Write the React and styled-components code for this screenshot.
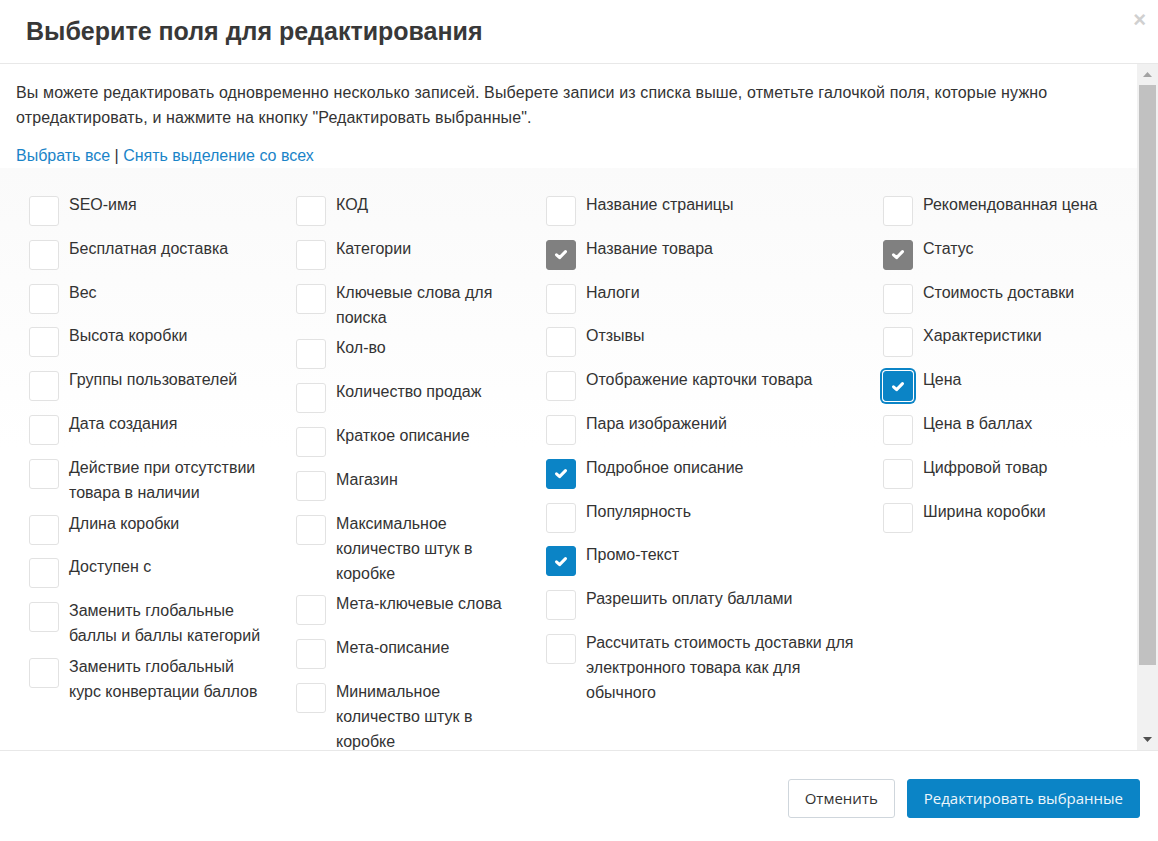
import React from 'react';
import styled, { createGlobalStyle } from 'styled-components';

//глобальные стили
const GlobalStyle = createGlobalStyle`
  html, body { margin: 0; padding: 0; background: #fff; }
  body { font-family: "Liberation Sans", Arial, sans-serif; color: #333; }
  * { box-sizing: border-box; }
`;

const BLUE = '#0b84c6';

const Modal = styled.div`
  width: 100vw;
  height: 100vh;
  display: flex;
  flex-direction: column;
  background: #fff;
`;

const Header = styled.div`
  height: 64px;
  flex-shrink: 0;
  display: flex;
  align-items: center;
  justify-content: space-between;
  padding: 0 12px 0 26px;
  border-bottom: 1px solid #e8e8e8;
`;

const Title = styled.h2`
  margin: 0 0 1px;
  font-size: 25px;
  font-weight: bold;
  color: #383838;
`;

const Close = styled.button`
  align-self: flex-start;
  margin-top: 9px;
  padding: 0;
  border: 0;
  background: none;
  font-family: "Liberation Sans", Arial, sans-serif;
  font-size: 22px;
  font-weight: bold;
  line-height: 1;
  color: #d0d0d0;
  cursor: pointer;
`;

const BodyRow = styled.div`
  flex: 1;
  min-height: 0;
  display: flex;
`;

const Content = styled.div`
  flex: 1;
  overflow: hidden;
  padding: 16px 0 0 16px;
`;

//полоса прокрутки (нарисованная)
const ScrollBar = styled.div`
  width: 21px;
  flex-shrink: 0;
  display: flex;
  flex-direction: column;
  background: #f1f1f1;
`;

const ScrollButton = styled.div`
  height: 21px;
  flex-shrink: 0;
  display: flex;
  align-items: center;
  justify-content: center;
`;

const Track = styled.div`
  flex: 1;
  padding: 0 2px;
`;

const Thumb = styled.div`
  height: 580px;
  background: #c1c1c1;
`;

const Intro = styled.p`
  margin: 0 16px 13px 0;
  font-size: 16px;
  line-height: 25px;
  letter-spacing: 0.13px;
  color: #333;
`;

const Links = styled.div`
  font-size: 16px;
  line-height: 25px;
  color: #333;
`;

const Link = styled.a`
  color: #1a84c8;
  text-decoration: none;
  cursor: pointer;
`;

const Fields = styled.div`
  display: grid;
  grid-template-columns: 267px 250px 337px 1fr;
  margin-left: -16px;
  padding: 24px 0 70px 29px;
  background: linear-gradient(#fafafa, #fff 280px);
`;

const Column = styled.div`
  display: flex;
  flex-direction: column;
`;

const Item = styled.label`
  display: flex;
  align-items: flex-start;
  min-height: 38px;
  margin-bottom: 5.8px;
  cursor: pointer;
`;

const Box = styled.span`
  flex-shrink: 0;
  width: 30px;
  height: 30px;
  margin-top: 4px;
  margin-right: 10px;
  border-radius: 3px;
  display: flex;
  align-items: center;
  justify-content: center;
  border: 1px solid ${p => (p.$state === 'gray' ? '#808080' : p.$state ? BLUE : '#e2e2e2')};
  background: ${p => (p.$state === 'gray' ? '#808080' : p.$state ? BLUE : '#fff')};
  box-shadow: ${p => (p.$state === 'focus' ? `0 0 0 1px #fff, 0 0 0 3px ${BLUE}` : 'none')};
`;

const Label = styled.span`
  font-size: 16px;
  line-height: 25px;
  color: #333;
  white-space: pre-line;
`;

const Footer = styled.div`
  height: 91px;
  flex-shrink: 0;
  display: flex;
  align-items: center;
  justify-content: flex-end;
  gap: 12px;
  padding: 4px 18px 0 0;
  border-top: 1px solid #e8e8e8;
`;

const Button = styled.button`
  height: 39px;
  padding: 0 16px;
  border-radius: 3px;
  font-family: "Open Sans", "Noto Sans", sans-serif;
  font-size: 15px;
  cursor: pointer;
  border: 1px solid ${p => (p.$primary ? BLUE : '#cfd6dc')};
  background: ${p => (p.$primary ? BLUE : '#fff')};
  color: ${p => (p.$primary ? '#eef6fb' : '#333')};
`;

const Check = () => (
  <svg width="14" height="11" viewBox="0 0 14 11">
    <polyline points="2.5,5.8 5.6,8.6 11.5,2.6" fill="none" stroke="#fff" strokeWidth="3" strokeLinecap="round" strokeLinejoin="round" />
  </svg>
);

const Arrow = ({ down }) => (
  <svg width="9" height="5" viewBox="0 0 9 5">
    {down
      ? <polygon points="0,0 9,0 4.5,5" fill="#505050" />
      : <polygon points="0,5 9,5 4.5,0" fill="#a3a3a3" />}
  </svg>
);

//поля по колонкам
const columns = [
  [
    ['SEO-имя'],
    ['Бесплатная доставка'],
    ['Вес'],
    ['Высота коробки'],
    ['Группы пользователей'],
    ['Дата создания'],
    ['Действие при отсутствии\nтовара в наличии'],
    ['Длина коробки'],
    ['Доступен с'],
    ['Заменить глобальные\nбаллы и баллы категорий'],
    ['Заменить глобальный\nкурс конвертации баллов'],
  ],
  [
    ['КОД'],
    ['Категории'],
    ['Ключевые слова для\nпоиска'],
    ['Кол-во'],
    ['Количество продаж'],
    ['Краткое описание'],
    ['Магазин'],
    ['Максимальное\nколичество штук в\nкоробке'],
    ['Мета-ключевые слова'],
    ['Мета-описание'],
    ['Минимальное\nколичество штук в\nкоробке'],
  ],
  [
    ['Название страницы'],
    ['Название товара', 'gray'],
    ['Налоги'],
    ['Отзывы'],
    ['Отображение карточки товара'],
    ['Пара изображений'],
    ['Подробное описание', 'blue'],
    ['Популярность'],
    ['Промо-текст', 'blue'],
    ['Разрешить оплату баллами'],
    ['Рассчитать стоимость доставки для\nэлектронного товара как для\nобычного'],
  ],
  [
    ['Рекомендованная цена'],
    ['Статус', 'gray'],
    ['Стоимость доставки'],
    ['Характеристики'],
    ['Цена', 'focus'],
    ['Цена в баллах'],
    ['Цифровой товар'],
    ['Ширина коробки'],
  ],
];

const App = () => {
  return (
    <Modal>
      <GlobalStyle />
      <Header>
        <Title>Выберите поля для редактирования</Title>
        <Close>×</Close>
      </Header>
      <BodyRow>
        <Content>
          <Intro>
            Вы можете редактировать одновременно несколько записей. Выберете записи из списка выше, отметьте галочкой поля, которые нужно отредактировать, и нажмите на кнопку "Редактировать выбранные".
          </Intro>
          <Links>
            <Link>Выбрать все</Link> | <Link>Снять выделение со всех</Link>
          </Links>
          <Fields>
            {columns.map((col, i) => (
              <Column key={i}>
                {col.map(([name, state]) => (
                  <Item key={name}>
                    <Box $state={state}>{state && <Check />}</Box>
                    <Label>{name}</Label>
                  </Item>
                ))}
              </Column>
            ))}
          </Fields>
        </Content>
        <ScrollBar>
          <ScrollButton><Arrow /></ScrollButton>
          <Track><Thumb /></Track>
          <ScrollButton><Arrow down /></ScrollButton>
        </ScrollBar>
      </BodyRow>
      <Footer>
        <Button>Отменить</Button>
        <Button $primary>Редактировать выбранные</Button>
      </Footer>
    </Modal>
  );
};

export default App;
